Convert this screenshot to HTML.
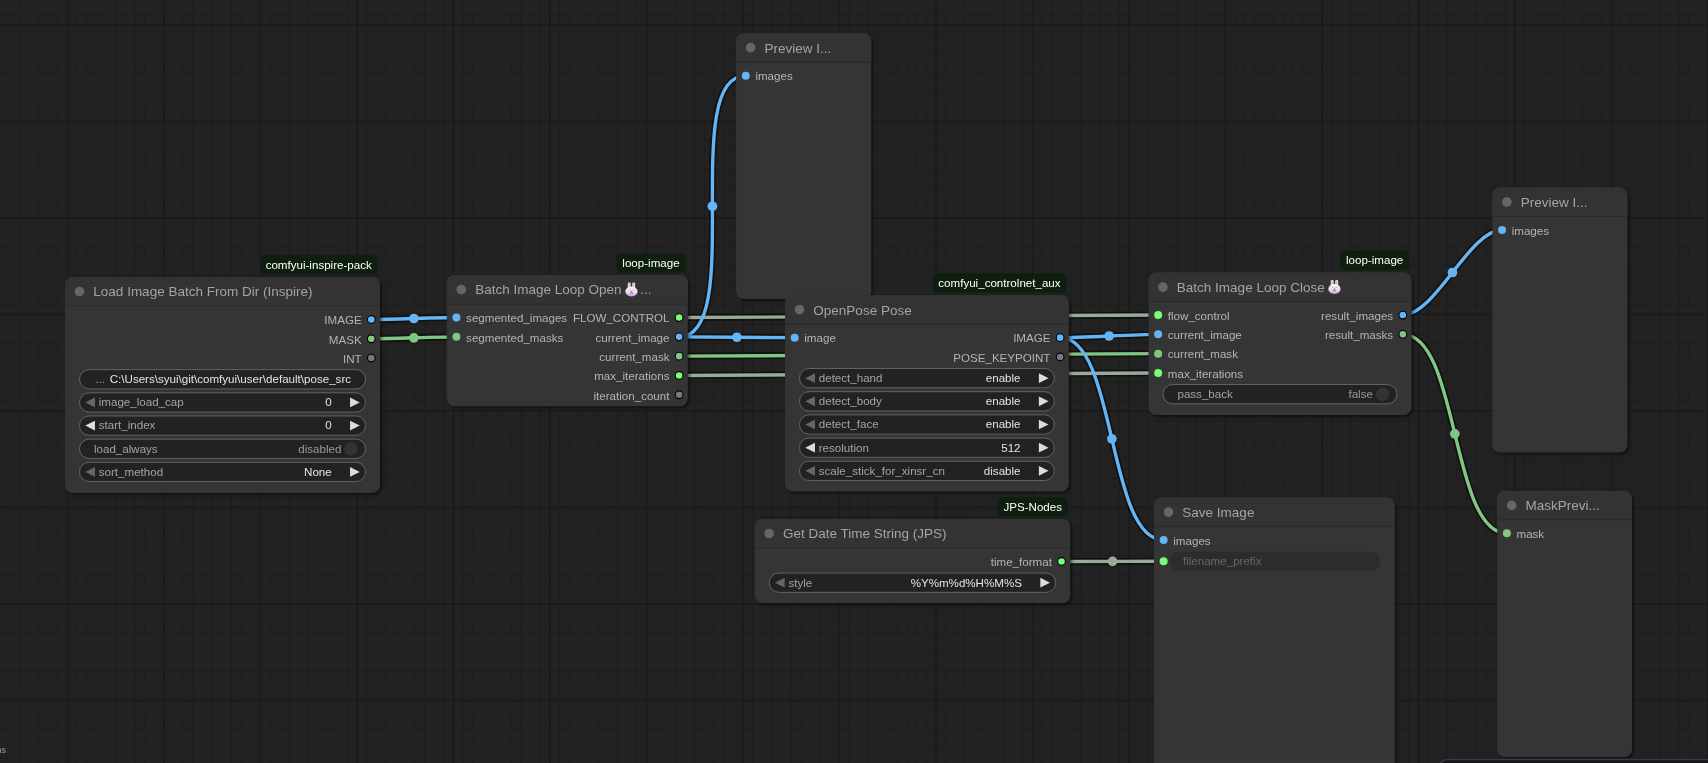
<!DOCTYPE html>
<html><head><meta charset="utf-8"><style>html,body{margin:0;padding:0;background:#222;overflow:hidden;width:1708px;height:763px}svg{display:block}text{font-family:"Liberation Sans",sans-serif}</style></head><body>
<svg width="1708" height="763" viewBox="0 0 1708 763" style="will-change:transform">
<defs><linearGradient id="bun" x1="0" y1="0" x2="0" y2="1"><stop offset="0" stop-color="#f4f4f4"/><stop offset="0.55" stop-color="#e6e0ec"/><stop offset="1" stop-color="#c5a6e4"/></linearGradient><filter id="sh" x="-10%" y="-10%" width="120%" height="120%"><feGaussianBlur stdDeviation="1.5"/></filter></defs>
<rect width="1708" height="763" fill="#222"/>
<rect x="-0.65" y="0" width="1" height="763" fill="#1e1e1e"/>
<rect x="9.00" y="0" width="1" height="763" fill="#1e1e1e"/>
<rect x="18.65" y="0" width="1" height="763" fill="#1e1e1e"/>
<rect x="28.30" y="0" width="1" height="763" fill="#1e1e1e"/>
<rect x="37.95" y="0" width="1" height="763" fill="#1e1e1e"/>
<rect x="47.60" y="0" width="1" height="763" fill="#1e1e1e"/>
<rect x="57.25" y="0" width="1" height="763" fill="#1e1e1e"/>
<rect x="66.65" y="0" width="1.5" height="763" fill="#1a1a1a"/>
<rect x="76.55" y="0" width="1" height="763" fill="#1e1e1e"/>
<rect x="86.20" y="0" width="1" height="763" fill="#1e1e1e"/>
<rect x="95.85" y="0" width="1" height="763" fill="#1e1e1e"/>
<rect x="105.50" y="0" width="1" height="763" fill="#1e1e1e"/>
<rect x="115.15" y="0" width="1" height="763" fill="#1e1e1e"/>
<rect x="124.80" y="0" width="1" height="763" fill="#1e1e1e"/>
<rect x="134.45" y="0" width="1" height="763" fill="#1e1e1e"/>
<rect x="144.10" y="0" width="1" height="763" fill="#1e1e1e"/>
<rect x="153.75" y="0" width="1" height="763" fill="#1e1e1e"/>
<rect x="163.15" y="0" width="1.5" height="763" fill="#1a1a1a"/>
<rect x="173.05" y="0" width="1" height="763" fill="#1e1e1e"/>
<rect x="182.70" y="0" width="1" height="763" fill="#1e1e1e"/>
<rect x="192.35" y="0" width="1" height="763" fill="#1e1e1e"/>
<rect x="202.00" y="0" width="1" height="763" fill="#1e1e1e"/>
<rect x="211.65" y="0" width="1" height="763" fill="#1e1e1e"/>
<rect x="221.30" y="0" width="1" height="763" fill="#1e1e1e"/>
<rect x="230.95" y="0" width="1" height="763" fill="#1e1e1e"/>
<rect x="240.60" y="0" width="1" height="763" fill="#1e1e1e"/>
<rect x="250.25" y="0" width="1" height="763" fill="#1e1e1e"/>
<rect x="259.65" y="0" width="1.5" height="763" fill="#1a1a1a"/>
<rect x="269.55" y="0" width="1" height="763" fill="#1e1e1e"/>
<rect x="279.20" y="0" width="1" height="763" fill="#1e1e1e"/>
<rect x="288.85" y="0" width="1" height="763" fill="#1e1e1e"/>
<rect x="298.50" y="0" width="1" height="763" fill="#1e1e1e"/>
<rect x="308.15" y="0" width="1" height="763" fill="#1e1e1e"/>
<rect x="317.80" y="0" width="1" height="763" fill="#1e1e1e"/>
<rect x="327.45" y="0" width="1" height="763" fill="#1e1e1e"/>
<rect x="337.10" y="0" width="1" height="763" fill="#1e1e1e"/>
<rect x="346.75" y="0" width="1" height="763" fill="#1e1e1e"/>
<rect x="356.15" y="0" width="1.5" height="763" fill="#1a1a1a"/>
<rect x="366.05" y="0" width="1" height="763" fill="#1e1e1e"/>
<rect x="375.70" y="0" width="1" height="763" fill="#1e1e1e"/>
<rect x="385.35" y="0" width="1" height="763" fill="#1e1e1e"/>
<rect x="395.00" y="0" width="1" height="763" fill="#1e1e1e"/>
<rect x="404.65" y="0" width="1" height="763" fill="#1e1e1e"/>
<rect x="414.30" y="0" width="1" height="763" fill="#1e1e1e"/>
<rect x="423.95" y="0" width="1" height="763" fill="#1e1e1e"/>
<rect x="433.60" y="0" width="1" height="763" fill="#1e1e1e"/>
<rect x="443.25" y="0" width="1" height="763" fill="#1e1e1e"/>
<rect x="452.65" y="0" width="1.5" height="763" fill="#1a1a1a"/>
<rect x="462.55" y="0" width="1" height="763" fill="#1e1e1e"/>
<rect x="472.20" y="0" width="1" height="763" fill="#1e1e1e"/>
<rect x="481.85" y="0" width="1" height="763" fill="#1e1e1e"/>
<rect x="491.50" y="0" width="1" height="763" fill="#1e1e1e"/>
<rect x="501.15" y="0" width="1" height="763" fill="#1e1e1e"/>
<rect x="510.80" y="0" width="1" height="763" fill="#1e1e1e"/>
<rect x="520.45" y="0" width="1" height="763" fill="#1e1e1e"/>
<rect x="530.10" y="0" width="1" height="763" fill="#1e1e1e"/>
<rect x="539.75" y="0" width="1" height="763" fill="#1e1e1e"/>
<rect x="549.15" y="0" width="1.5" height="763" fill="#1a1a1a"/>
<rect x="559.05" y="0" width="1" height="763" fill="#1e1e1e"/>
<rect x="568.70" y="0" width="1" height="763" fill="#1e1e1e"/>
<rect x="578.35" y="0" width="1" height="763" fill="#1e1e1e"/>
<rect x="588.00" y="0" width="1" height="763" fill="#1e1e1e"/>
<rect x="597.65" y="0" width="1" height="763" fill="#1e1e1e"/>
<rect x="607.30" y="0" width="1" height="763" fill="#1e1e1e"/>
<rect x="616.95" y="0" width="1" height="763" fill="#1e1e1e"/>
<rect x="626.60" y="0" width="1" height="763" fill="#1e1e1e"/>
<rect x="636.25" y="0" width="1" height="763" fill="#1e1e1e"/>
<rect x="645.65" y="0" width="1.5" height="763" fill="#1a1a1a"/>
<rect x="655.55" y="0" width="1" height="763" fill="#1e1e1e"/>
<rect x="665.20" y="0" width="1" height="763" fill="#1e1e1e"/>
<rect x="674.85" y="0" width="1" height="763" fill="#1e1e1e"/>
<rect x="684.50" y="0" width="1" height="763" fill="#1e1e1e"/>
<rect x="694.15" y="0" width="1" height="763" fill="#1e1e1e"/>
<rect x="703.80" y="0" width="1" height="763" fill="#1e1e1e"/>
<rect x="713.45" y="0" width="1" height="763" fill="#1e1e1e"/>
<rect x="723.10" y="0" width="1" height="763" fill="#1e1e1e"/>
<rect x="732.75" y="0" width="1" height="763" fill="#1e1e1e"/>
<rect x="742.15" y="0" width="1.5" height="763" fill="#1a1a1a"/>
<rect x="752.05" y="0" width="1" height="763" fill="#1e1e1e"/>
<rect x="761.70" y="0" width="1" height="763" fill="#1e1e1e"/>
<rect x="771.35" y="0" width="1" height="763" fill="#1e1e1e"/>
<rect x="781.00" y="0" width="1" height="763" fill="#1e1e1e"/>
<rect x="790.65" y="0" width="1" height="763" fill="#1e1e1e"/>
<rect x="800.30" y="0" width="1" height="763" fill="#1e1e1e"/>
<rect x="809.95" y="0" width="1" height="763" fill="#1e1e1e"/>
<rect x="819.60" y="0" width="1" height="763" fill="#1e1e1e"/>
<rect x="829.25" y="0" width="1" height="763" fill="#1e1e1e"/>
<rect x="838.65" y="0" width="1.5" height="763" fill="#1a1a1a"/>
<rect x="848.55" y="0" width="1" height="763" fill="#1e1e1e"/>
<rect x="858.20" y="0" width="1" height="763" fill="#1e1e1e"/>
<rect x="867.85" y="0" width="1" height="763" fill="#1e1e1e"/>
<rect x="877.50" y="0" width="1" height="763" fill="#1e1e1e"/>
<rect x="887.15" y="0" width="1" height="763" fill="#1e1e1e"/>
<rect x="896.80" y="0" width="1" height="763" fill="#1e1e1e"/>
<rect x="906.45" y="0" width="1" height="763" fill="#1e1e1e"/>
<rect x="916.10" y="0" width="1" height="763" fill="#1e1e1e"/>
<rect x="925.75" y="0" width="1" height="763" fill="#1e1e1e"/>
<rect x="935.15" y="0" width="1.5" height="763" fill="#1a1a1a"/>
<rect x="945.05" y="0" width="1" height="763" fill="#1e1e1e"/>
<rect x="954.70" y="0" width="1" height="763" fill="#1e1e1e"/>
<rect x="964.35" y="0" width="1" height="763" fill="#1e1e1e"/>
<rect x="974.00" y="0" width="1" height="763" fill="#1e1e1e"/>
<rect x="983.65" y="0" width="1" height="763" fill="#1e1e1e"/>
<rect x="993.30" y="0" width="1" height="763" fill="#1e1e1e"/>
<rect x="1002.95" y="0" width="1" height="763" fill="#1e1e1e"/>
<rect x="1012.60" y="0" width="1" height="763" fill="#1e1e1e"/>
<rect x="1022.25" y="0" width="1" height="763" fill="#1e1e1e"/>
<rect x="1031.65" y="0" width="1.5" height="763" fill="#1a1a1a"/>
<rect x="1041.55" y="0" width="1" height="763" fill="#1e1e1e"/>
<rect x="1051.20" y="0" width="1" height="763" fill="#1e1e1e"/>
<rect x="1060.85" y="0" width="1" height="763" fill="#1e1e1e"/>
<rect x="1070.50" y="0" width="1" height="763" fill="#1e1e1e"/>
<rect x="1080.15" y="0" width="1" height="763" fill="#1e1e1e"/>
<rect x="1089.80" y="0" width="1" height="763" fill="#1e1e1e"/>
<rect x="1099.45" y="0" width="1" height="763" fill="#1e1e1e"/>
<rect x="1109.10" y="0" width="1" height="763" fill="#1e1e1e"/>
<rect x="1118.75" y="0" width="1" height="763" fill="#1e1e1e"/>
<rect x="1128.15" y="0" width="1.5" height="763" fill="#1a1a1a"/>
<rect x="1138.05" y="0" width="1" height="763" fill="#1e1e1e"/>
<rect x="1147.70" y="0" width="1" height="763" fill="#1e1e1e"/>
<rect x="1157.35" y="0" width="1" height="763" fill="#1e1e1e"/>
<rect x="1167.00" y="0" width="1" height="763" fill="#1e1e1e"/>
<rect x="1176.65" y="0" width="1" height="763" fill="#1e1e1e"/>
<rect x="1186.30" y="0" width="1" height="763" fill="#1e1e1e"/>
<rect x="1195.95" y="0" width="1" height="763" fill="#1e1e1e"/>
<rect x="1205.60" y="0" width="1" height="763" fill="#1e1e1e"/>
<rect x="1215.25" y="0" width="1" height="763" fill="#1e1e1e"/>
<rect x="1224.65" y="0" width="1.5" height="763" fill="#1a1a1a"/>
<rect x="1234.55" y="0" width="1" height="763" fill="#1e1e1e"/>
<rect x="1244.20" y="0" width="1" height="763" fill="#1e1e1e"/>
<rect x="1253.85" y="0" width="1" height="763" fill="#1e1e1e"/>
<rect x="1263.50" y="0" width="1" height="763" fill="#1e1e1e"/>
<rect x="1273.15" y="0" width="1" height="763" fill="#1e1e1e"/>
<rect x="1282.80" y="0" width="1" height="763" fill="#1e1e1e"/>
<rect x="1292.45" y="0" width="1" height="763" fill="#1e1e1e"/>
<rect x="1302.10" y="0" width="1" height="763" fill="#1e1e1e"/>
<rect x="1311.75" y="0" width="1" height="763" fill="#1e1e1e"/>
<rect x="1321.15" y="0" width="1.5" height="763" fill="#1a1a1a"/>
<rect x="1331.05" y="0" width="1" height="763" fill="#1e1e1e"/>
<rect x="1340.70" y="0" width="1" height="763" fill="#1e1e1e"/>
<rect x="1350.35" y="0" width="1" height="763" fill="#1e1e1e"/>
<rect x="1360.00" y="0" width="1" height="763" fill="#1e1e1e"/>
<rect x="1369.65" y="0" width="1" height="763" fill="#1e1e1e"/>
<rect x="1379.30" y="0" width="1" height="763" fill="#1e1e1e"/>
<rect x="1388.95" y="0" width="1" height="763" fill="#1e1e1e"/>
<rect x="1398.60" y="0" width="1" height="763" fill="#1e1e1e"/>
<rect x="1408.25" y="0" width="1" height="763" fill="#1e1e1e"/>
<rect x="1417.65" y="0" width="1.5" height="763" fill="#1a1a1a"/>
<rect x="1427.55" y="0" width="1" height="763" fill="#1e1e1e"/>
<rect x="1437.20" y="0" width="1" height="763" fill="#1e1e1e"/>
<rect x="1446.85" y="0" width="1" height="763" fill="#1e1e1e"/>
<rect x="1456.50" y="0" width="1" height="763" fill="#1e1e1e"/>
<rect x="1466.15" y="0" width="1" height="763" fill="#1e1e1e"/>
<rect x="1475.80" y="0" width="1" height="763" fill="#1e1e1e"/>
<rect x="1485.45" y="0" width="1" height="763" fill="#1e1e1e"/>
<rect x="1495.10" y="0" width="1" height="763" fill="#1e1e1e"/>
<rect x="1504.75" y="0" width="1" height="763" fill="#1e1e1e"/>
<rect x="1514.15" y="0" width="1.5" height="763" fill="#1a1a1a"/>
<rect x="1524.05" y="0" width="1" height="763" fill="#1e1e1e"/>
<rect x="1533.70" y="0" width="1" height="763" fill="#1e1e1e"/>
<rect x="1543.35" y="0" width="1" height="763" fill="#1e1e1e"/>
<rect x="1553.00" y="0" width="1" height="763" fill="#1e1e1e"/>
<rect x="1562.65" y="0" width="1" height="763" fill="#1e1e1e"/>
<rect x="1572.30" y="0" width="1" height="763" fill="#1e1e1e"/>
<rect x="1581.95" y="0" width="1" height="763" fill="#1e1e1e"/>
<rect x="1591.60" y="0" width="1" height="763" fill="#1e1e1e"/>
<rect x="1601.25" y="0" width="1" height="763" fill="#1e1e1e"/>
<rect x="1610.65" y="0" width="1.5" height="763" fill="#1a1a1a"/>
<rect x="1620.55" y="0" width="1" height="763" fill="#1e1e1e"/>
<rect x="1630.20" y="0" width="1" height="763" fill="#1e1e1e"/>
<rect x="1639.85" y="0" width="1" height="763" fill="#1e1e1e"/>
<rect x="1649.50" y="0" width="1" height="763" fill="#1e1e1e"/>
<rect x="1659.15" y="0" width="1" height="763" fill="#1e1e1e"/>
<rect x="1668.80" y="0" width="1" height="763" fill="#1e1e1e"/>
<rect x="1678.45" y="0" width="1" height="763" fill="#1e1e1e"/>
<rect x="1688.10" y="0" width="1" height="763" fill="#1e1e1e"/>
<rect x="1697.75" y="0" width="1" height="763" fill="#1e1e1e"/>
<rect x="1707.15" y="0" width="1.5" height="763" fill="#1a1a1a"/>
<rect x="0" y="-4.55" width="1708" height="1" fill="#1e1e1e"/>
<rect x="0" y="5.10" width="1708" height="1" fill="#1e1e1e"/>
<rect x="0" y="14.75" width="1708" height="1" fill="#1e1e1e"/>
<rect x="0" y="24.15" width="1708" height="1.5" fill="#1a1a1a"/>
<rect x="0" y="34.05" width="1708" height="1" fill="#1e1e1e"/>
<rect x="0" y="43.70" width="1708" height="1" fill="#1e1e1e"/>
<rect x="0" y="53.35" width="1708" height="1" fill="#1e1e1e"/>
<rect x="0" y="63.00" width="1708" height="1" fill="#1e1e1e"/>
<rect x="0" y="72.65" width="1708" height="1" fill="#1e1e1e"/>
<rect x="0" y="82.30" width="1708" height="1" fill="#1e1e1e"/>
<rect x="0" y="91.95" width="1708" height="1" fill="#1e1e1e"/>
<rect x="0" y="101.60" width="1708" height="1" fill="#1e1e1e"/>
<rect x="0" y="111.25" width="1708" height="1" fill="#1e1e1e"/>
<rect x="0" y="120.65" width="1708" height="1.5" fill="#1a1a1a"/>
<rect x="0" y="130.55" width="1708" height="1" fill="#1e1e1e"/>
<rect x="0" y="140.20" width="1708" height="1" fill="#1e1e1e"/>
<rect x="0" y="149.85" width="1708" height="1" fill="#1e1e1e"/>
<rect x="0" y="159.50" width="1708" height="1" fill="#1e1e1e"/>
<rect x="0" y="169.15" width="1708" height="1" fill="#1e1e1e"/>
<rect x="0" y="178.80" width="1708" height="1" fill="#1e1e1e"/>
<rect x="0" y="188.45" width="1708" height="1" fill="#1e1e1e"/>
<rect x="0" y="198.10" width="1708" height="1" fill="#1e1e1e"/>
<rect x="0" y="207.75" width="1708" height="1" fill="#1e1e1e"/>
<rect x="0" y="217.15" width="1708" height="1.5" fill="#1a1a1a"/>
<rect x="0" y="227.05" width="1708" height="1" fill="#1e1e1e"/>
<rect x="0" y="236.70" width="1708" height="1" fill="#1e1e1e"/>
<rect x="0" y="246.35" width="1708" height="1" fill="#1e1e1e"/>
<rect x="0" y="256.00" width="1708" height="1" fill="#1e1e1e"/>
<rect x="0" y="265.65" width="1708" height="1" fill="#1e1e1e"/>
<rect x="0" y="275.30" width="1708" height="1" fill="#1e1e1e"/>
<rect x="0" y="284.95" width="1708" height="1" fill="#1e1e1e"/>
<rect x="0" y="294.60" width="1708" height="1" fill="#1e1e1e"/>
<rect x="0" y="304.25" width="1708" height="1" fill="#1e1e1e"/>
<rect x="0" y="313.65" width="1708" height="1.5" fill="#1a1a1a"/>
<rect x="0" y="323.55" width="1708" height="1" fill="#1e1e1e"/>
<rect x="0" y="333.20" width="1708" height="1" fill="#1e1e1e"/>
<rect x="0" y="342.85" width="1708" height="1" fill="#1e1e1e"/>
<rect x="0" y="352.50" width="1708" height="1" fill="#1e1e1e"/>
<rect x="0" y="362.15" width="1708" height="1" fill="#1e1e1e"/>
<rect x="0" y="371.80" width="1708" height="1" fill="#1e1e1e"/>
<rect x="0" y="381.45" width="1708" height="1" fill="#1e1e1e"/>
<rect x="0" y="391.10" width="1708" height="1" fill="#1e1e1e"/>
<rect x="0" y="400.75" width="1708" height="1" fill="#1e1e1e"/>
<rect x="0" y="410.15" width="1708" height="1.5" fill="#1a1a1a"/>
<rect x="0" y="420.05" width="1708" height="1" fill="#1e1e1e"/>
<rect x="0" y="429.70" width="1708" height="1" fill="#1e1e1e"/>
<rect x="0" y="439.35" width="1708" height="1" fill="#1e1e1e"/>
<rect x="0" y="449.00" width="1708" height="1" fill="#1e1e1e"/>
<rect x="0" y="458.65" width="1708" height="1" fill="#1e1e1e"/>
<rect x="0" y="468.30" width="1708" height="1" fill="#1e1e1e"/>
<rect x="0" y="477.95" width="1708" height="1" fill="#1e1e1e"/>
<rect x="0" y="487.60" width="1708" height="1" fill="#1e1e1e"/>
<rect x="0" y="497.25" width="1708" height="1" fill="#1e1e1e"/>
<rect x="0" y="506.65" width="1708" height="1.5" fill="#1a1a1a"/>
<rect x="0" y="516.55" width="1708" height="1" fill="#1e1e1e"/>
<rect x="0" y="526.20" width="1708" height="1" fill="#1e1e1e"/>
<rect x="0" y="535.85" width="1708" height="1" fill="#1e1e1e"/>
<rect x="0" y="545.50" width="1708" height="1" fill="#1e1e1e"/>
<rect x="0" y="555.15" width="1708" height="1" fill="#1e1e1e"/>
<rect x="0" y="564.80" width="1708" height="1" fill="#1e1e1e"/>
<rect x="0" y="574.45" width="1708" height="1" fill="#1e1e1e"/>
<rect x="0" y="584.10" width="1708" height="1" fill="#1e1e1e"/>
<rect x="0" y="593.75" width="1708" height="1" fill="#1e1e1e"/>
<rect x="0" y="603.15" width="1708" height="1.5" fill="#1a1a1a"/>
<rect x="0" y="613.05" width="1708" height="1" fill="#1e1e1e"/>
<rect x="0" y="622.70" width="1708" height="1" fill="#1e1e1e"/>
<rect x="0" y="632.35" width="1708" height="1" fill="#1e1e1e"/>
<rect x="0" y="642.00" width="1708" height="1" fill="#1e1e1e"/>
<rect x="0" y="651.65" width="1708" height="1" fill="#1e1e1e"/>
<rect x="0" y="661.30" width="1708" height="1" fill="#1e1e1e"/>
<rect x="0" y="670.95" width="1708" height="1" fill="#1e1e1e"/>
<rect x="0" y="680.60" width="1708" height="1" fill="#1e1e1e"/>
<rect x="0" y="690.25" width="1708" height="1" fill="#1e1e1e"/>
<rect x="0" y="699.65" width="1708" height="1.5" fill="#1a1a1a"/>
<rect x="0" y="709.55" width="1708" height="1" fill="#1e1e1e"/>
<rect x="0" y="719.20" width="1708" height="1" fill="#1e1e1e"/>
<rect x="0" y="728.85" width="1708" height="1" fill="#1e1e1e"/>
<rect x="0" y="738.50" width="1708" height="1" fill="#1e1e1e"/>
<rect x="0" y="748.15" width="1708" height="1" fill="#1e1e1e"/>
<rect x="0" y="757.80" width="1708" height="1" fill="#1e1e1e"/>
<path d="M371.31,319.46 C392.60,319.46 435.16,317.56 456.45,317.56" stroke="rgba(0,0,0,0.5)" stroke-width="6.75" fill="none"/>
<path d="M371.31,338.76 C392.60,338.76 435.16,336.86 456.45,336.86" stroke="rgba(0,0,0,0.5)" stroke-width="6.75" fill="none"/>
<path d="M679.12,317.56 C798.88,317.56 1038.39,315.06 1158.15,315.06" stroke="rgba(0,0,0,0.5)" stroke-width="6.75" fill="none"/>
<path d="M679.12,336.86 C746.51,336.86 678.36,75.66 745.75,75.66" stroke="rgba(0,0,0,0.5)" stroke-width="6.75" fill="none"/>
<path d="M679.12,336.86 C708.00,336.86 765.77,337.66 794.65,337.66" stroke="rgba(0,0,0,0.5)" stroke-width="6.75" fill="none"/>
<path d="M679.12,356.16 C798.88,356.16 1038.39,353.66 1158.15,353.66" stroke="rgba(0,0,0,0.5)" stroke-width="6.75" fill="none"/>
<path d="M679.12,375.46 C798.88,375.46 1038.39,372.96 1158.15,372.96" stroke="rgba(0,0,0,0.5)" stroke-width="6.75" fill="none"/>
<path d="M1060.12,337.66 C1084.64,337.66 1133.63,334.36 1158.15,334.36" stroke="rgba(0,0,0,0.5)" stroke-width="6.75" fill="none"/>
<path d="M1060.12,337.66 C1116.95,337.66 1106.81,540.06 1163.65,540.06" stroke="rgba(0,0,0,0.5)" stroke-width="6.75" fill="none"/>
<path d="M1402.82,315.06 C1435.50,315.06 1469.37,229.96 1502.05,229.96" stroke="rgba(0,0,0,0.5)" stroke-width="6.75" fill="none"/>
<path d="M1402.82,334.36 C1458.95,334.36 1450.71,533.36 1506.85,533.36" stroke="rgba(0,0,0,0.5)" stroke-width="6.75" fill="none"/>
<path d="M1061.52,561.46 C1087.05,561.46 1138.12,561.29 1163.65,561.29" stroke="rgba(0,0,0,0.5)" stroke-width="6.75" fill="none"/>
<path d="M371.31,319.46 C392.60,319.46 435.16,317.56 456.45,317.56" stroke="#64B5F6" stroke-width="3.4" fill="none"/>
<circle cx="413.88" cy="318.51" r="4.83" fill="#64B5F6"/>
<path d="M371.31,338.76 C392.60,338.76 435.16,336.86 456.45,336.86" stroke="#81C784" stroke-width="3.4" fill="none"/>
<circle cx="413.88" cy="337.81" r="4.83" fill="#81C784"/>
<path d="M679.12,317.56 C798.88,317.56 1038.39,315.06 1158.15,315.06" stroke="#9A9" stroke-width="3.4" fill="none"/>
<circle cx="918.63" cy="316.31" r="4.83" fill="#9A9"/>
<path d="M679.12,336.86 C746.51,336.86 678.36,75.66 745.75,75.66" stroke="#64B5F6" stroke-width="3.4" fill="none"/>
<circle cx="712.43" cy="206.26" r="4.83" fill="#64B5F6"/>
<path d="M679.12,336.86 C708.00,336.86 765.77,337.66 794.65,337.66" stroke="#64B5F6" stroke-width="3.4" fill="none"/>
<circle cx="736.88" cy="337.26" r="4.83" fill="#64B5F6"/>
<path d="M679.12,356.16 C798.88,356.16 1038.39,353.66 1158.15,353.66" stroke="#81C784" stroke-width="3.4" fill="none"/>
<circle cx="918.63" cy="354.91" r="4.83" fill="#81C784"/>
<path d="M679.12,375.46 C798.88,375.46 1038.39,372.96 1158.15,372.96" stroke="#9A9" stroke-width="3.4" fill="none"/>
<circle cx="918.63" cy="374.21" r="4.83" fill="#9A9"/>
<path d="M1060.12,337.66 C1084.64,337.66 1133.63,334.36 1158.15,334.36" stroke="#64B5F6" stroke-width="3.4" fill="none"/>
<circle cx="1109.13" cy="336.01" r="4.83" fill="#64B5F6"/>
<path d="M1060.12,337.66 C1116.95,337.66 1106.81,540.06 1163.65,540.06" stroke="#64B5F6" stroke-width="3.4" fill="none"/>
<circle cx="1111.88" cy="438.86" r="4.83" fill="#64B5F6"/>
<path d="M1402.82,315.06 C1435.50,315.06 1469.37,229.96 1502.05,229.96" stroke="#64B5F6" stroke-width="3.4" fill="none"/>
<circle cx="1452.43" cy="272.51" r="4.83" fill="#64B5F6"/>
<path d="M1402.82,334.36 C1458.95,334.36 1450.71,533.36 1506.85,533.36" stroke="#81C784" stroke-width="3.4" fill="none"/>
<circle cx="1454.83" cy="433.86" r="4.83" fill="#81C784"/>
<path d="M1061.52,561.46 C1087.05,561.46 1138.12,561.29 1163.65,561.29" stroke="#9A9" stroke-width="3.4" fill="none"/>
<circle cx="1112.58" cy="561.38" r="4.83" fill="#9A9"/>
<rect x="738.03" y="35.13" width="135.20" height="265.80" rx="7.72" fill="rgba(0,0,0,0.5)" filter="url(#sh)"/>
<rect x="736.10" y="33.20" width="135.20" height="265.80" rx="7.72" fill="#353535"/>
<path d="M736.10,62.15 V40.92 A7.72,7.72 0 0 1 743.82,33.20 H863.58 A7.72,7.72 0 0 1 871.30,40.92 V62.15 Z" fill="#333"/>
<rect x="736.10" y="61.65" width="135.20" height="1" fill="#2a2a2a"/>
<circle cx="750.58" cy="47.68" r="4.83" fill="#666"/>
<text x="764.45" y="52.50" font-size="13.51" fill="#A4A4A4">Preview I...</text>
<circle cx="745.75" cy="75.66" r="4" fill="#64B5F6"/>
<text x="755.40" y="80.49" font-size="11.58" fill="#B4B4B4">images</text>
<rect x="66.93" y="278.93" width="315.00" height="216.00" rx="7.72" fill="rgba(0,0,0,0.5)" filter="url(#sh)"/>
<rect x="65.00" y="277.00" width="315.00" height="216.00" rx="7.72" fill="#353535"/>
<path d="M65.00,305.95 V284.72 A7.72,7.72 0 0 1 72.72,277.00 H372.28 A7.72,7.72 0 0 1 380.00,284.72 V305.95 Z" fill="#333"/>
<rect x="65.00" y="305.45" width="315.00" height="1" fill="#2a2a2a"/>
<circle cx="79.47" cy="291.48" r="4.83" fill="#666"/>
<text x="93.35" y="296.30" font-size="13.51" fill="#A4A4A4">Load Image Batch From Dir (Inspire)</text>
<circle cx="371.31" cy="319.46" r="3.86" fill="#64B5F6" stroke="#000" stroke-width="1.1"/>
<text x="361.67" y="324.28" font-size="11.58" fill="#B4B4B4" text-anchor="end">IMAGE</text>
<circle cx="371.31" cy="338.76" r="3.86" fill="#81C784" stroke="#000" stroke-width="1.1"/>
<text x="361.67" y="343.58" font-size="11.58" fill="#B4B4B4" text-anchor="end">MASK</text>
<circle cx="371.31" cy="358.06" r="3.86" fill="#778" stroke="#000" stroke-width="1.1"/>
<text x="361.67" y="362.88" font-size="11.58" fill="#B4B4B4" text-anchor="end">INT</text>
<rect x="79.47" y="369.64" width="286.05" height="19.30" rx="9.65" fill="#222" stroke="#666" stroke-width="0.965"/>
<text x="95.45" y="383.15" font-size="11.58" fill="#A4A4A4">...</text>
<text x="351.05" y="383.15" font-size="11.58" fill="#E4E4E4" text-anchor="end">C:\Users\syui\git\comfyui\user\default\pose_src</text>
<rect x="79.47" y="392.80" width="286.05" height="19.30" rx="9.65" fill="#222" stroke="#666" stroke-width="0.965"/>
<path d="M94.91,397.62 L85.27,402.45 L94.91,407.27 Z" fill="#666"/>
<path d="M350.08,397.62 L359.73,402.45 L350.08,407.27 Z" fill="#DDD"/>
<text x="98.78" y="406.31" font-size="11.58" fill="#A4A4A4">image_load_cap</text>
<text x="331.75" y="406.31" font-size="11.58" fill="#E4E4E4" text-anchor="end">0</text>
<rect x="79.47" y="415.96" width="286.05" height="19.30" rx="9.65" fill="#222" stroke="#666" stroke-width="0.965"/>
<path d="M94.91,420.78 L85.27,425.61 L94.91,430.44 Z" fill="#DDD"/>
<path d="M350.08,420.78 L359.73,425.61 L350.08,430.44 Z" fill="#DDD"/>
<text x="98.78" y="429.47" font-size="11.58" fill="#A4A4A4">start_index</text>
<text x="331.75" y="429.47" font-size="11.58" fill="#E4E4E4" text-anchor="end">0</text>
<rect x="79.47" y="439.12" width="286.05" height="19.30" rx="9.65" fill="#222" stroke="#666" stroke-width="0.965"/>
<text x="93.95" y="452.63" font-size="11.58" fill="#A4A4A4">load_always</text>
<text x="341.40" y="452.63" font-size="11.58" fill="#999" text-anchor="end">disabled</text>
<circle cx="351.05" cy="448.77" r="6.75" fill="#333"/>
<rect x="79.47" y="462.28" width="286.05" height="19.30" rx="9.65" fill="#222" stroke="#666" stroke-width="0.965"/>
<path d="M94.91,467.10 L85.27,471.93 L94.91,476.75 Z" fill="#666"/>
<path d="M350.08,467.10 L359.73,471.93 L350.08,476.75 Z" fill="#DDD"/>
<text x="98.78" y="475.79" font-size="11.58" fill="#A4A4A4">sort_method</text>
<text x="331.75" y="475.79" font-size="11.58" fill="#E4E4E4" text-anchor="end">None</text>
<rect x="259.84" y="255.30" width="117.76" height="19.30" rx="4.83" fill="#0F1F0F"/>
<text x="265.63" y="268.81" font-size="11.58" fill="#FFF">comfyui-inspire-pack</text>
<rect x="448.73" y="277.03" width="241.00" height="131.10" rx="7.72" fill="rgba(0,0,0,0.5)" filter="url(#sh)"/>
<rect x="446.80" y="275.10" width="241.00" height="131.10" rx="7.72" fill="#353535"/>
<path d="M446.80,304.05 V282.82 A7.72,7.72 0 0 1 454.52,275.10 H680.08 A7.72,7.72 0 0 1 687.80,282.82 V304.05 Z" fill="#333"/>
<rect x="446.80" y="303.55" width="241.00" height="1" fill="#2a2a2a"/>
<circle cx="461.28" cy="289.58" r="4.83" fill="#666"/>
<text x="475.15" y="294.40" font-size="13.51" fill="#A4A4A4">Batch Image Loop Open</text>
<rect x="627.76" y="282.40" width="2.9" height="6.5" rx="1.4" fill="#eeeeee"/>
<rect x="632.26" y="282.40" width="2.9" height="6.5" rx="1.4" fill="#eeeeee"/>
<rect x="628.61" y="283.20" width="1.2" height="4.2" rx="0.6" fill="#f2a39a"/>
<rect x="633.11" y="283.20" width="1.2" height="4.2" rx="0.6" fill="#f2a39a"/>
<ellipse cx="631.46" cy="291.50" rx="6.1" ry="4.9" fill="url(#bun)"/>
<circle cx="629.56" cy="290.00" r="0.6" fill="#9a9a9a"/>
<circle cx="633.36" cy="290.00" r="0.6" fill="#9a9a9a"/>
<ellipse cx="631.46" cy="291.80" rx="0.8" ry="1.0" fill="#e8508a"/>
<circle cx="630.56" cy="293.30" r="0.55" fill="#503050"/>
<circle cx="632.36" cy="293.30" r="0.55" fill="#503050"/>
<text x="640.31" y="294.40" font-size="13.51" fill="#999">...</text>
<circle cx="456.45" cy="317.56" r="4" fill="#64B5F6"/>
<text x="466.10" y="322.38" font-size="11.58" fill="#B4B4B4">segmented_images</text>
<circle cx="456.45" cy="336.86" r="4" fill="#81C784"/>
<text x="466.10" y="341.69" font-size="11.58" fill="#B4B4B4">segmented_masks</text>
<circle cx="679.12" cy="317.56" r="3.86" fill="#7F7" stroke="#000" stroke-width="1.1"/>
<text x="669.47" y="322.38" font-size="11.58" fill="#B4B4B4" text-anchor="end">FLOW_CONTROL</text>
<circle cx="679.12" cy="336.86" r="3.86" fill="#64B5F6" stroke="#000" stroke-width="1.1"/>
<text x="669.47" y="341.69" font-size="11.58" fill="#B4B4B4" text-anchor="end">current_image</text>
<circle cx="679.12" cy="356.16" r="3.86" fill="#81C784" stroke="#000" stroke-width="1.1"/>
<text x="669.47" y="360.99" font-size="11.58" fill="#B4B4B4" text-anchor="end">current_mask</text>
<circle cx="679.12" cy="375.46" r="3.86" fill="#7F7" stroke="#000" stroke-width="1.1"/>
<text x="669.47" y="380.29" font-size="11.58" fill="#B4B4B4" text-anchor="end">max_iterations</text>
<circle cx="679.12" cy="394.76" r="3.86" fill="#778" stroke="#000" stroke-width="1.1"/>
<text x="669.47" y="399.58" font-size="11.58" fill="#B4B4B4" text-anchor="end">iteration_count</text>
<rect x="616.53" y="253.40" width="68.87" height="19.30" rx="4.83" fill="#0F1F0F"/>
<text x="622.32" y="266.91" font-size="11.58" fill="#FFF">loop-image</text>
<rect x="786.93" y="297.13" width="283.80" height="196.40" rx="7.72" fill="rgba(0,0,0,0.5)" filter="url(#sh)"/>
<rect x="785.00" y="295.20" width="283.80" height="196.40" rx="7.72" fill="#353535"/>
<path d="M785.00,324.15 V302.92 A7.72,7.72 0 0 1 792.72,295.20 H1061.08 A7.72,7.72 0 0 1 1068.80,302.92 V324.15 Z" fill="#333"/>
<rect x="785.00" y="323.65" width="283.80" height="1" fill="#2a2a2a"/>
<circle cx="799.48" cy="309.68" r="4.83" fill="#666"/>
<text x="813.35" y="314.50" font-size="13.51" fill="#A4A4A4">OpenPose Pose</text>
<circle cx="794.65" cy="337.66" r="4" fill="#64B5F6"/>
<text x="804.30" y="342.48" font-size="11.58" fill="#B4B4B4">image</text>
<circle cx="1060.12" cy="337.66" r="3.86" fill="#64B5F6" stroke="#000" stroke-width="1.1"/>
<text x="1050.46" y="342.48" font-size="11.58" fill="#B4B4B4" text-anchor="end">IMAGE</text>
<circle cx="1060.12" cy="356.96" r="3.86" fill="#778" stroke="#000" stroke-width="1.1"/>
<text x="1050.46" y="361.78" font-size="11.58" fill="#B4B4B4" text-anchor="end">POSE_KEYPOINT</text>
<rect x="799.48" y="368.54" width="254.85" height="19.30" rx="9.65" fill="#222" stroke="#666" stroke-width="0.965"/>
<path d="M814.92,373.36 L805.26,378.19 L814.92,383.01 Z" fill="#666"/>
<path d="M1038.88,373.36 L1048.54,378.19 L1038.88,383.01 Z" fill="#DDD"/>
<text x="818.77" y="382.05" font-size="11.58" fill="#A4A4A4">detect_hand</text>
<text x="1020.55" y="382.05" font-size="11.58" fill="#E4E4E4" text-anchor="end">enable</text>
<rect x="799.48" y="391.70" width="254.85" height="19.30" rx="9.65" fill="#222" stroke="#666" stroke-width="0.965"/>
<path d="M814.92,396.52 L805.26,401.35 L814.92,406.18 Z" fill="#666"/>
<path d="M1038.88,396.52 L1048.54,401.35 L1038.88,406.18 Z" fill="#DDD"/>
<text x="818.77" y="405.21" font-size="11.58" fill="#A4A4A4">detect_body</text>
<text x="1020.55" y="405.21" font-size="11.58" fill="#E4E4E4" text-anchor="end">enable</text>
<rect x="799.48" y="414.86" width="254.85" height="19.30" rx="9.65" fill="#222" stroke="#666" stroke-width="0.965"/>
<path d="M814.92,419.68 L805.26,424.51 L814.92,429.33 Z" fill="#666"/>
<path d="M1038.88,419.68 L1048.54,424.51 L1038.88,429.33 Z" fill="#DDD"/>
<text x="818.77" y="428.37" font-size="11.58" fill="#A4A4A4">detect_face</text>
<text x="1020.55" y="428.37" font-size="11.58" fill="#E4E4E4" text-anchor="end">enable</text>
<rect x="799.48" y="438.02" width="254.85" height="19.30" rx="9.65" fill="#222" stroke="#666" stroke-width="0.965"/>
<path d="M814.92,442.84 L805.26,447.67 L814.92,452.50 Z" fill="#DDD"/>
<path d="M1038.88,442.84 L1048.54,447.67 L1038.88,452.50 Z" fill="#DDD"/>
<text x="818.77" y="451.53" font-size="11.58" fill="#A4A4A4">resolution</text>
<text x="1020.55" y="451.53" font-size="11.58" fill="#E4E4E4" text-anchor="end">512</text>
<rect x="799.48" y="461.18" width="254.85" height="19.30" rx="9.65" fill="#222" stroke="#666" stroke-width="0.965"/>
<path d="M814.92,466.00 L805.26,470.83 L814.92,475.65 Z" fill="#666"/>
<path d="M1038.88,466.00 L1048.54,470.83 L1038.88,475.65 Z" fill="#DDD"/>
<text x="818.77" y="474.69" font-size="11.58" fill="#A4A4A4">scale_stick_for_xinsr_cn</text>
<text x="1020.55" y="474.69" font-size="11.58" fill="#E4E4E4" text-anchor="end">disable</text>
<rect x="932.52" y="273.50" width="133.88" height="19.30" rx="4.83" fill="#0F1F0F"/>
<text x="938.31" y="287.01" font-size="11.58" fill="#FFF">comfyui_controlnet_aux</text>
<rect x="1150.43" y="274.53" width="263.00" height="142.40" rx="7.72" fill="rgba(0,0,0,0.5)" filter="url(#sh)"/>
<rect x="1148.50" y="272.60" width="263.00" height="142.40" rx="7.72" fill="#353535"/>
<path d="M1148.50,301.55 V280.32 A7.72,7.72 0 0 1 1156.22,272.60 H1403.78 A7.72,7.72 0 0 1 1411.50,280.32 V301.55 Z" fill="#333"/>
<rect x="1148.50" y="301.05" width="263.00" height="1" fill="#2a2a2a"/>
<circle cx="1162.97" cy="287.08" r="4.83" fill="#666"/>
<text x="1176.85" y="291.90" font-size="13.51" fill="#A4A4A4">Batch Image Loop Close</text>
<rect x="1330.75" y="279.90" width="2.9" height="6.5" rx="1.4" fill="#eeeeee"/>
<rect x="1335.25" y="279.90" width="2.9" height="6.5" rx="1.4" fill="#eeeeee"/>
<rect x="1331.60" y="280.70" width="1.2" height="4.2" rx="0.6" fill="#f2a39a"/>
<rect x="1336.10" y="280.70" width="1.2" height="4.2" rx="0.6" fill="#f2a39a"/>
<ellipse cx="1334.45" cy="289.00" rx="6.1" ry="4.9" fill="url(#bun)"/>
<circle cx="1332.55" cy="287.50" r="0.6" fill="#9a9a9a"/>
<circle cx="1336.35" cy="287.50" r="0.6" fill="#9a9a9a"/>
<ellipse cx="1334.45" cy="289.30" rx="0.8" ry="1.0" fill="#e8508a"/>
<circle cx="1333.55" cy="290.80" r="0.55" fill="#503050"/>
<circle cx="1335.35" cy="290.80" r="0.55" fill="#503050"/>
<circle cx="1158.15" cy="315.06" r="4" fill="#7F7"/>
<text x="1167.80" y="319.88" font-size="11.58" fill="#B4B4B4">flow_control</text>
<circle cx="1158.15" cy="334.36" r="4" fill="#64B5F6"/>
<text x="1167.80" y="339.19" font-size="11.58" fill="#B4B4B4">current_image</text>
<circle cx="1158.15" cy="353.66" r="4" fill="#81C784"/>
<text x="1167.80" y="358.49" font-size="11.58" fill="#B4B4B4">current_mask</text>
<circle cx="1158.15" cy="372.96" r="4" fill="#7F7"/>
<text x="1167.80" y="377.79" font-size="11.58" fill="#B4B4B4">max_iterations</text>
<circle cx="1402.82" cy="315.06" r="3.86" fill="#64B5F6" stroke="#000" stroke-width="1.1"/>
<text x="1393.16" y="319.88" font-size="11.58" fill="#B4B4B4" text-anchor="end">result_images</text>
<circle cx="1402.82" cy="334.36" r="3.86" fill="#81C784" stroke="#000" stroke-width="1.1"/>
<text x="1393.16" y="339.19" font-size="11.58" fill="#B4B4B4" text-anchor="end">result_masks</text>
<rect x="1162.97" y="384.54" width="234.05" height="19.30" rx="9.65" fill="#222" stroke="#666" stroke-width="0.965"/>
<text x="1177.45" y="398.05" font-size="11.58" fill="#A4A4A4">pass_back</text>
<text x="1372.90" y="398.05" font-size="11.58" fill="#999" text-anchor="end">false</text>
<circle cx="1382.55" cy="394.19" r="6.75" fill="#333"/>
<rect x="1340.23" y="250.90" width="68.87" height="19.30" rx="4.83" fill="#0F1F0F"/>
<text x="1346.02" y="264.41" font-size="11.58" fill="#FFF">loop-image</text>
<rect x="1494.33" y="189.43" width="135.00" height="265.00" rx="7.72" fill="rgba(0,0,0,0.5)" filter="url(#sh)"/>
<rect x="1492.40" y="187.50" width="135.00" height="265.00" rx="7.72" fill="#353535"/>
<path d="M1492.40,216.45 V195.22 A7.72,7.72 0 0 1 1500.12,187.50 H1619.68 A7.72,7.72 0 0 1 1627.40,195.22 V216.45 Z" fill="#333"/>
<rect x="1492.40" y="215.95" width="135.00" height="1" fill="#2a2a2a"/>
<circle cx="1506.88" cy="201.97" r="4.83" fill="#666"/>
<text x="1520.75" y="206.80" font-size="13.51" fill="#A4A4A4">Preview I...</text>
<circle cx="1502.05" cy="229.96" r="4" fill="#64B5F6"/>
<text x="1511.70" y="234.78" font-size="11.58" fill="#B4B4B4">images</text>
<rect x="1155.93" y="499.53" width="240.80" height="320.00" rx="7.72" fill="rgba(0,0,0,0.5)" filter="url(#sh)"/>
<rect x="1154.00" y="497.60" width="240.80" height="320.00" rx="7.72" fill="#353535"/>
<path d="M1154.00,526.55 V505.32 A7.72,7.72 0 0 1 1161.72,497.60 H1387.08 A7.72,7.72 0 0 1 1394.80,505.32 V526.55 Z" fill="#333"/>
<rect x="1154.00" y="526.05" width="240.80" height="1" fill="#2a2a2a"/>
<circle cx="1168.47" cy="512.08" r="4.83" fill="#666"/>
<text x="1182.35" y="516.90" font-size="13.51" fill="#A4A4A4">Save Image</text>
<circle cx="1163.65" cy="540.06" r="4" fill="#64B5F6"/>
<text x="1173.30" y="544.89" font-size="11.58" fill="#B4B4B4">images</text>
<circle cx="1163.65" cy="561.29" r="4" fill="#7F7"/>
<rect x="1169.44" y="551.64" width="210.89" height="19.30" rx="9.65" fill="#2c2c2c"/>
<text x="1182.95" y="565.15" font-size="11.58" fill="#666">filename_prefix</text>
<rect x="1499.13" y="492.83" width="134.80" height="266.00" rx="7.72" fill="rgba(0,0,0,0.5)" filter="url(#sh)"/>
<rect x="1497.20" y="490.90" width="134.80" height="266.00" rx="7.72" fill="#353535"/>
<path d="M1497.20,519.85 V498.62 A7.72,7.72 0 0 1 1504.92,490.90 H1624.28 A7.72,7.72 0 0 1 1632.00,498.62 V519.85 Z" fill="#333"/>
<rect x="1497.20" y="519.35" width="134.80" height="1" fill="#2a2a2a"/>
<circle cx="1511.67" cy="505.38" r="4.83" fill="#666"/>
<text x="1525.55" y="510.20" font-size="13.51" fill="#A4A4A4">MaskPrevi...</text>
<circle cx="1506.85" cy="533.36" r="4" fill="#81C784"/>
<text x="1516.50" y="538.19" font-size="11.58" fill="#B4B4B4">mask</text>
<rect x="756.63" y="520.93" width="315.50" height="84.30" rx="7.72" fill="rgba(0,0,0,0.5)" filter="url(#sh)"/>
<rect x="754.70" y="519.00" width="315.50" height="84.30" rx="7.72" fill="#353535"/>
<path d="M754.70,547.95 V526.72 A7.72,7.72 0 0 1 762.42,519.00 H1062.48 A7.72,7.72 0 0 1 1070.20,526.72 V547.95 Z" fill="#333"/>
<rect x="754.70" y="547.45" width="315.50" height="1" fill="#2a2a2a"/>
<circle cx="769.18" cy="533.48" r="4.83" fill="#666"/>
<text x="783.05" y="538.30" font-size="13.51" fill="#A4A4A4">Get Date Time String (JPS)</text>
<circle cx="1061.52" cy="561.46" r="3.86" fill="#7F7" stroke="#000" stroke-width="1.1"/>
<text x="1051.87" y="566.29" font-size="11.58" fill="#B4B4B4" text-anchor="end">time_format</text>
<rect x="769.18" y="573.04" width="286.55" height="19.30" rx="9.65" fill="#222" stroke="#666" stroke-width="0.965"/>
<path d="M784.62,577.87 L774.97,582.69 L784.62,587.51 Z" fill="#666"/>
<path d="M1040.29,577.87 L1049.94,582.69 L1040.29,587.51 Z" fill="#DDD"/>
<text x="788.48" y="586.55" font-size="11.58" fill="#A4A4A4">style</text>
<text x="1021.95" y="586.55" font-size="11.58" fill="#E4E4E4" text-anchor="end">%Y%m%d%H%M%S</text>
<rect x="997.65" y="497.30" width="70.15" height="19.30" rx="4.83" fill="#0F1F0F"/>
<text x="1003.44" y="510.81" font-size="11.58" fill="#FFF">JPS-Nodes</text>
<rect x="1439.5" y="759.5" width="300" height="40" rx="8" fill="#15151a" stroke="#3a3a42" stroke-width="1.5"/>
<text x="-3.6" y="753" font-size="9" fill="#9a9a9a">ns</text>
</svg></body></html>
